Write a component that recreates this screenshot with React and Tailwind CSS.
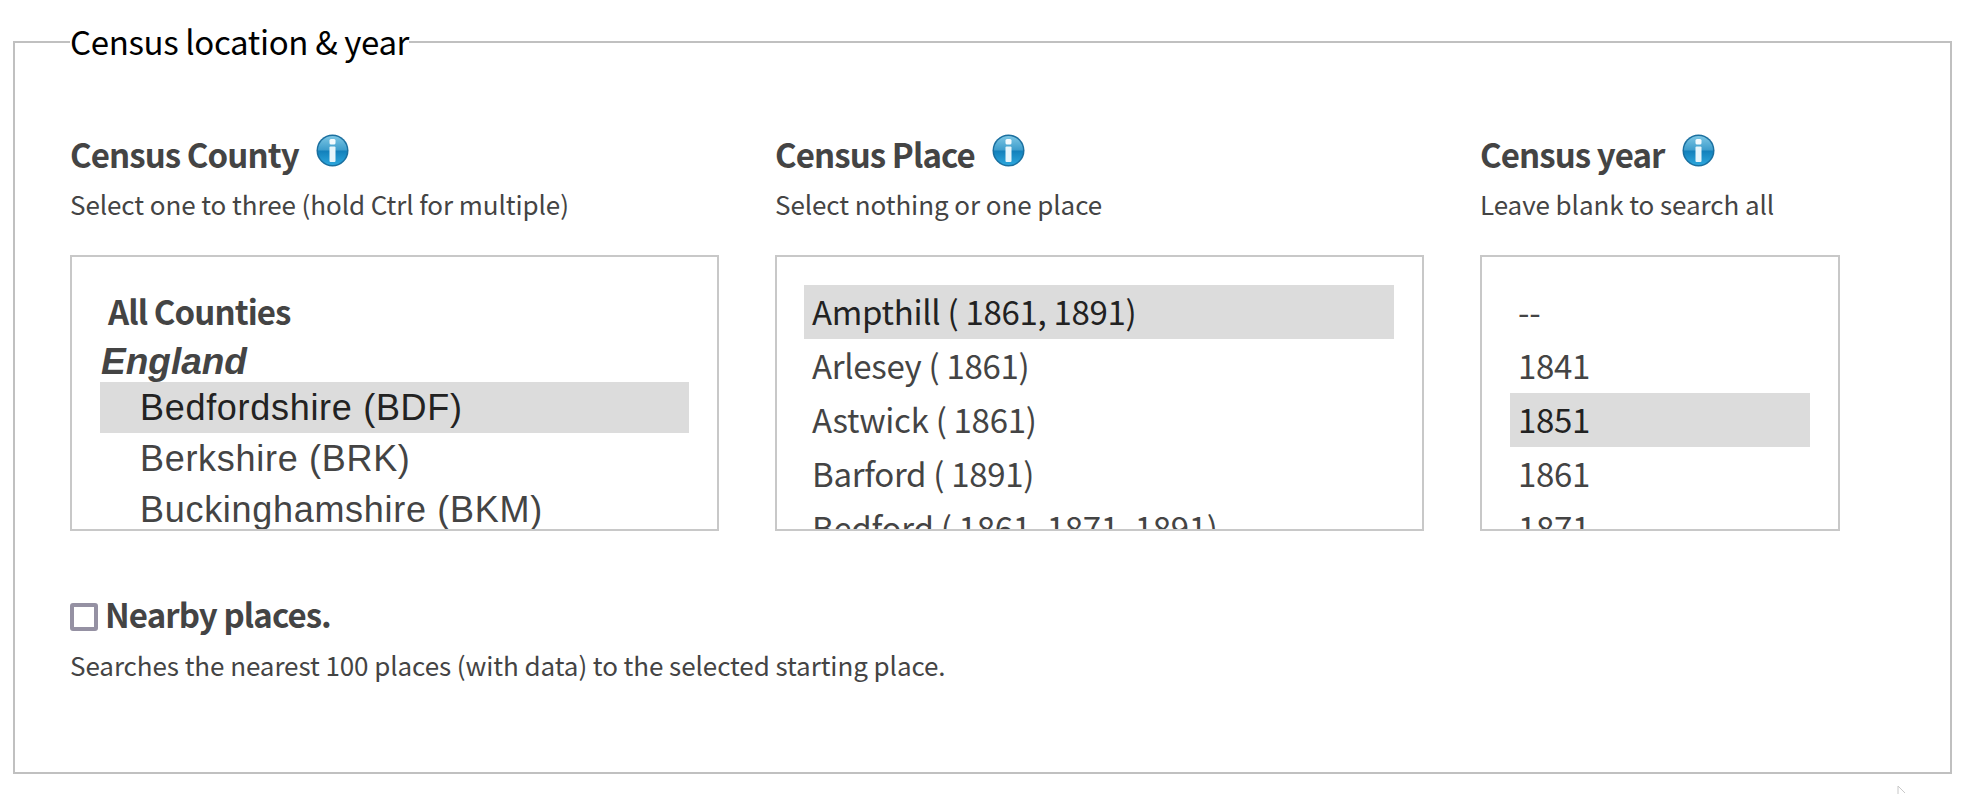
const sans = "font-['Noto_Sans_CJK_SC','Noto_Sans',sans-serif]";

function InfoIcon({ id }) {
  return (
    <svg width="33" height="33" viewBox="0 0 33 33" className="shrink-0">
      <defs>
        <linearGradient id={id} x1="0" y1="0" x2="0" y2="1">
          <stop offset="0" stopColor="#7cc6e4" />
          <stop offset="0.48" stopColor="#3d9dcc" />
          <stop offset="0.52" stopColor="#1280bb" />
          <stop offset="1" stopColor="#2ca6dc" />
        </linearGradient>
      </defs>
      <circle cx="16.5" cy="16.5" r="16" fill="#1a6f9f" />
      <circle cx="16.5" cy="16.5" r="14.5" fill={`url(#${id})`} />
      <rect x="13.5" y="5" width="6" height="5.5" rx="1.5" fill="#f4fbfe" />
      <rect x="13.5" y="12.5" width="6" height="15.5" rx="1" fill="#e6f5fb" />
    </svg>
  );
}

function Heading({ title, hint, id }) {
  return (
    <div>
      <div className="flex h-[50px] items-start gap-[17px]">
        <h3 className="text-[33px] leading-[50px] font-bold tracking-[-0.9px] text-[#444]">{title}</h3>
        <div className="mt-[5px]">
          <InfoIcon id={id} />
        </div>
      </div>
      <p className="text-[26px] leading-[50px] tracking-[-0.08px] text-[#444]">{hint}</p>
    </div>
  );
}

function Option({ children, selected }) {
  return (
    <div className={`h-[54px] px-[8px] text-[33px] leading-[52px] tracking-[-0.3px] whitespace-nowrap ${selected ? "bg-[#dcdcdc] text-[#222]" : "text-[#444]"}`}>
      {children}
    </div>
  );
}

function CountyOption({ children, selected }) {
  return (
    <div className={`h-[51px] pl-[40px] font-['Liberation_Sans',sans-serif] text-[36px] leading-[51px] tracking-[0.7px] whitespace-nowrap ${selected ? "bg-[#dcdcdc] text-[#222]" : "text-[#444]"}`}>
      {children}
    </div>
  );
}

export default function App() {
  return (
    <div className={`relative h-[794px] overflow-hidden bg-white pt-[19px] pl-[13px] pr-[16px] ${sans}`}>
      <fieldset className="h-[755px] border-2 border-[#c0c0c0] px-[55px]">
        <legend className="pb-[1px] text-[33px] leading-[44px] tracking-[-0.35px] text-black">Census location &amp; year</legend>

        <div className="mt-[65px] flex gap-[56px]">
          <div className="w-[649px]">
            <Heading title="Census County" hint="Select one to three (hold Ctrl for multiple)" id="info-county" />
            <div className="mt-[26px] h-[276px] overflow-hidden border-2 border-[#c8c8c8] px-[28px] pt-[32px]">
              <div className="h-[47px] pl-[8px] text-[33px] leading-[44px] font-bold tracking-[-0.9px] text-[#444]">All Counties</div>
              <div className="h-[46px] pl-[1px] font-['Liberation_Sans',sans-serif] text-[37px] leading-[52px] font-bold italic text-[#444]">England</div>
              <CountyOption selected>Bedfordshire (BDF)</CountyOption>
              <CountyOption>Berkshire (BRK)</CountyOption>
              <CountyOption>Buckinghamshire (BKM)</CountyOption>
            </div>
          </div>

          <div className="w-[649px]">
            <Heading title="Census Place" hint="Select nothing or one place" id="info-place" />
            <div className="mt-[26px] h-[276px] overflow-hidden border-2 border-[#c8c8c8] pr-[28px] pl-[27px] pt-[28px]">
              <Option selected>Ampthill ( 1861, 1891)</Option>
              <Option>Arlesey ( 1861)</Option>
              <Option>Astwick ( 1861)</Option>
              <Option>Barford ( 1891)</Option>
              <Option>Bedford ( 1861, 1871, 1891)</Option>
            </div>
          </div>

          <div className="w-[360px]">
            <Heading title="Census year" hint="Leave blank to search all" id="info-year" />
            <div className="mt-[26px] h-[276px] overflow-hidden border-2 border-[#c8c8c8] px-[28px] pt-[28px]">
              <Option>--</Option>
              <Option>1841</Option>
              <Option selected>1851</Option>
              <Option>1861</Option>
              <Option>1871</Option>
            </div>
          </div>
        </div>

        <label className="mt-[58px] flex items-center gap-[7px]">
          <span className="mt-[5px] h-[28px] w-[28px] rounded-[3px] border-[4px] border-[#9591a3] bg-white" />
          <span className="text-[33px] leading-[50px] font-bold tracking-[-0.9px] text-[#444]">Nearby places.</span>
        </label>
        <p className="mt-[1px] text-[26px] leading-[50px] tracking-[-0.08px] text-[#444]">
          Searches the nearest 100 places (with data) to the selected starting place.
        </p>
      </fieldset>

      {/* mouse pointer caught at the bottom edge */}
      <svg width="10" height="8" viewBox="0 0 10 8" className="absolute left-[1897px] top-[786px]">
        <path d="M1 0 L1 8 M1 0 L8 7" fill="none" stroke="#c8c8c8" strokeWidth="1" />
      </svg>
    </div>
  );
}
